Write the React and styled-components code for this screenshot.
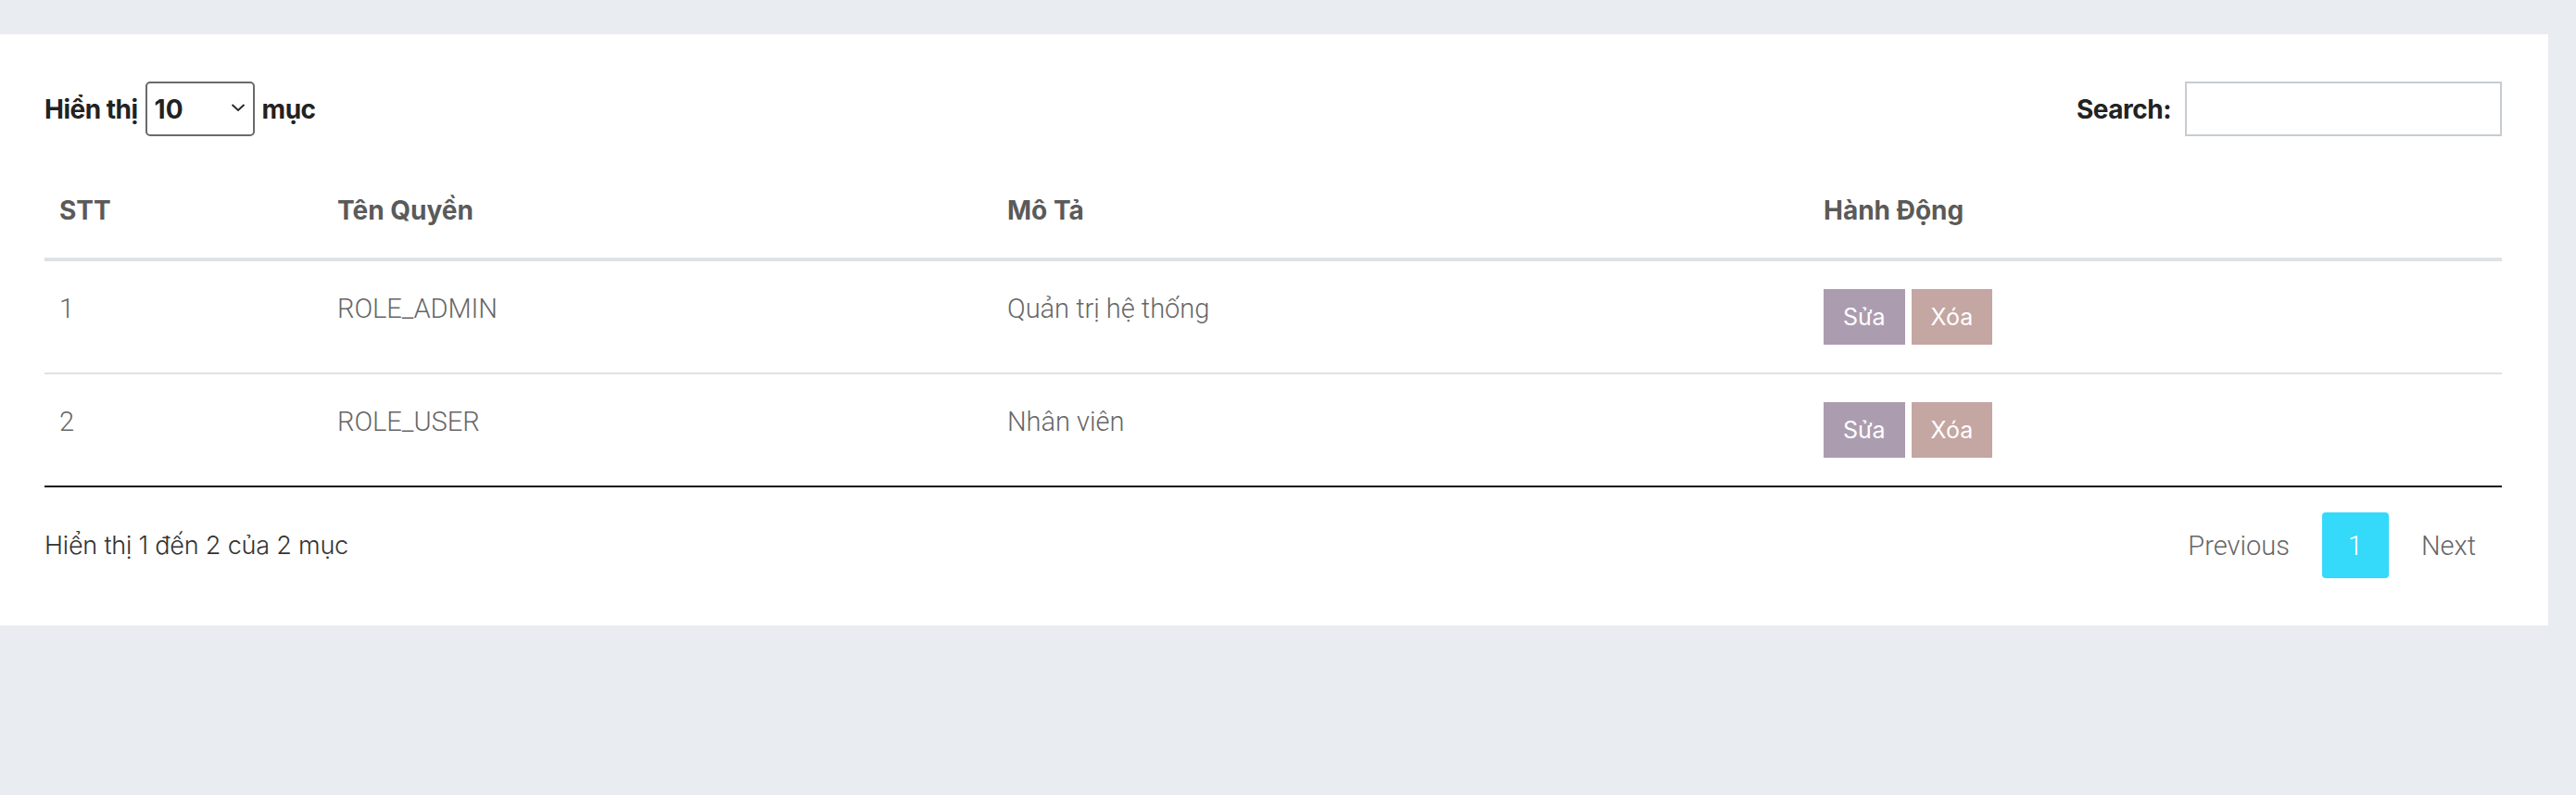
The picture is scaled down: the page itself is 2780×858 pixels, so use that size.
import React from 'react'
import styled, { createGlobalStyle } from 'styled-components'

const GlobalStyle = createGlobalStyle`
  html, body {
    margin: 0;
    padding: 0;
    background: #e9ecf1;
    font-family: Inter, "Noto Sans", sans-serif;
  }
`

const Page = styled.div`
  width: 2780px;
  height: 858px;
  box-sizing: border-box;
  padding: 37px 30px 0 0;
`

const Card = styled.div`
  background: #fff;
  padding: 51px 50px 51px 48px;
`

const TopBar = styled.div`
  display: flex;
  justify-content: space-between;
  align-items: center;
  height: 59px;
`

const Label = styled.label`
  display: flex;
  align-items: center;
  gap: ${({ gap }) => gap || '8px'};
  font-family: Inter, sans-serif;
  font-weight: 700;
  font-size: 28px;
  letter-spacing: -0.5px;
  color: #222;
`

const SelectWrap = styled.div`
  position: relative;
  width: 118px;
  height: 59px;
`

const Select = styled.select`
  appearance: none;
  width: 100%;
  height: 100%;
  box-sizing: border-box;
  border: 2px solid #6a6a6a;
  border-radius: 5px;
  background: #fff;
  padding: 0 0 0 8px;
  font-family: Inter, sans-serif;
  font-weight: 700;
  font-size: 28px;
  color: #222;
`

const Chevron = styled.svg`
  position: absolute;
  right: 10px;
  top: 22px;
  pointer-events: none;
`

const SearchInput = styled.input`
  width: 342px;
  height: 59px;
  box-sizing: border-box;
  border: 2px solid #c7ccd1;
  border-radius: 0;
  outline: none;
  padding: 0 12px;
  font-size: 26px;
`

const Table = styled.table`
  width: 100%;
  margin-top: 29px;
  border-collapse: collapse;
  table-layout: fixed;
`

const Th = styled.th`
  text-align: left;
  padding: 30px 16px;
  line-height: 42px;
  font-family: Inter, sans-serif;
  font-weight: 700;
  font-size: 28px;
  color: #5a5a5a;
  border-bottom: 4px solid #dee2e6;
`

const Row = styled.tr`
  border-bottom: 2px solid ${({ last }) => (last ? '#111' : '#dee2e6')};
`

const Td = styled.td`
  vertical-align: top;
  padding: 30px 16px;
  line-height: 42px;
  font-family: Roboto, sans-serif;
  font-weight: 300;
  font-size: 29px;
  color: #666;
`

const Actions = styled.div`
  display: flex;
  gap: 7px;
`

const ActionButton = styled.button`
  height: 60px;
  padding: 0 21px;
  border: none;
  border-radius: 0;
  background: ${({ tone }) => (tone === 'edit' ? '#ab9daf' : '#c4a6a3')};
  color: #fff;
  font-family: Inter, sans-serif;
  font-size: 25px;
  font-weight: 400;
`

const Footer = styled.div`
  display: flex;
  justify-content: space-between;
  align-items: center;
  margin-top: 27px;
`

const Info = styled.div`
  font-family: Inter, sans-serif;
  font-weight: 300;
  font-size: 27px;
  letter-spacing: -0.2px;
  color: #333;
`

const Pager = styled.div`
  display: flex;
  align-items: center;
  gap: 7px;
`

const PageButton = styled.div`
  height: 71px;
  display: flex;
  align-items: center;
  padding: 0 28px;
  border-radius: 4px;
  font-family: Roboto, sans-serif;
  font-weight: 300;
  font-size: 29px;
  color: ${({ active }) => (active ? '#fff' : '#666')};
  background: ${({ active }) => (active ? '#35d9f9' : 'transparent')};
`

const roles = [
  { id: 1, name: 'ROLE_ADMIN', desc: 'Quản trị hệ thống' },
  { id: 2, name: 'ROLE_USER', desc: 'Nhân viên' },
]

const App = () => {
  return (<Page>
    <GlobalStyle />
    <Card>
      <TopBar>
        <Label>
          Hiển thị
          <SelectWrap>
            <Select defaultValue='10'>
              <option value='10'>10</option>
              <option value='25'>25</option>
              <option value='50'>50</option>
            </Select>
            <Chevron width='16' height='12' viewBox='0 0 16 12'>
              <path d='M1.5 3 L8 9 L14.5 3' fill='none' stroke='#222' strokeWidth='1.8' />
            </Chevron>
          </SelectWrap>
          mục
        </Label>
        <Label gap='15px'>
          Search:
          <SearchInput type='search' />
        </Label>
      </TopBar>
      <Table>
        <colgroup>
          <col style={{ width: '300px' }} />
          <col style={{ width: '723px' }} />
          <col style={{ width: '881px' }} />
          <col />
        </colgroup>
        <thead>
          <tr>
            <Th>STT</Th>
            <Th>Tên Quyền</Th>
            <Th>Mô Tả</Th>
            <Th>Hành Động</Th>
          </tr>
        </thead>
        <tbody>
          {roles.map((role, i) => (<Row key={role.id} last={i === roles.length - 1}>
            <Td>{role.id}</Td>
            <Td>{role.name}</Td>
            <Td>{role.desc}</Td>
            <Td>
              <Actions>
                <ActionButton tone='edit'>Sửa</ActionButton>
                <ActionButton tone='delete'>Xóa</ActionButton>
              </Actions>
            </Td>
          </Row>))}
        </tbody>
      </Table>
      <Footer>
        <Info>Hiển thị 1 đến 2 của 2 mục</Info>
        <Pager>
          <PageButton>Previous</PageButton>
          <PageButton active>1</PageButton>
          <PageButton>Next</PageButton>
        </Pager>
      </Footer>
    </Card>
  </Page>)
}

export default App
